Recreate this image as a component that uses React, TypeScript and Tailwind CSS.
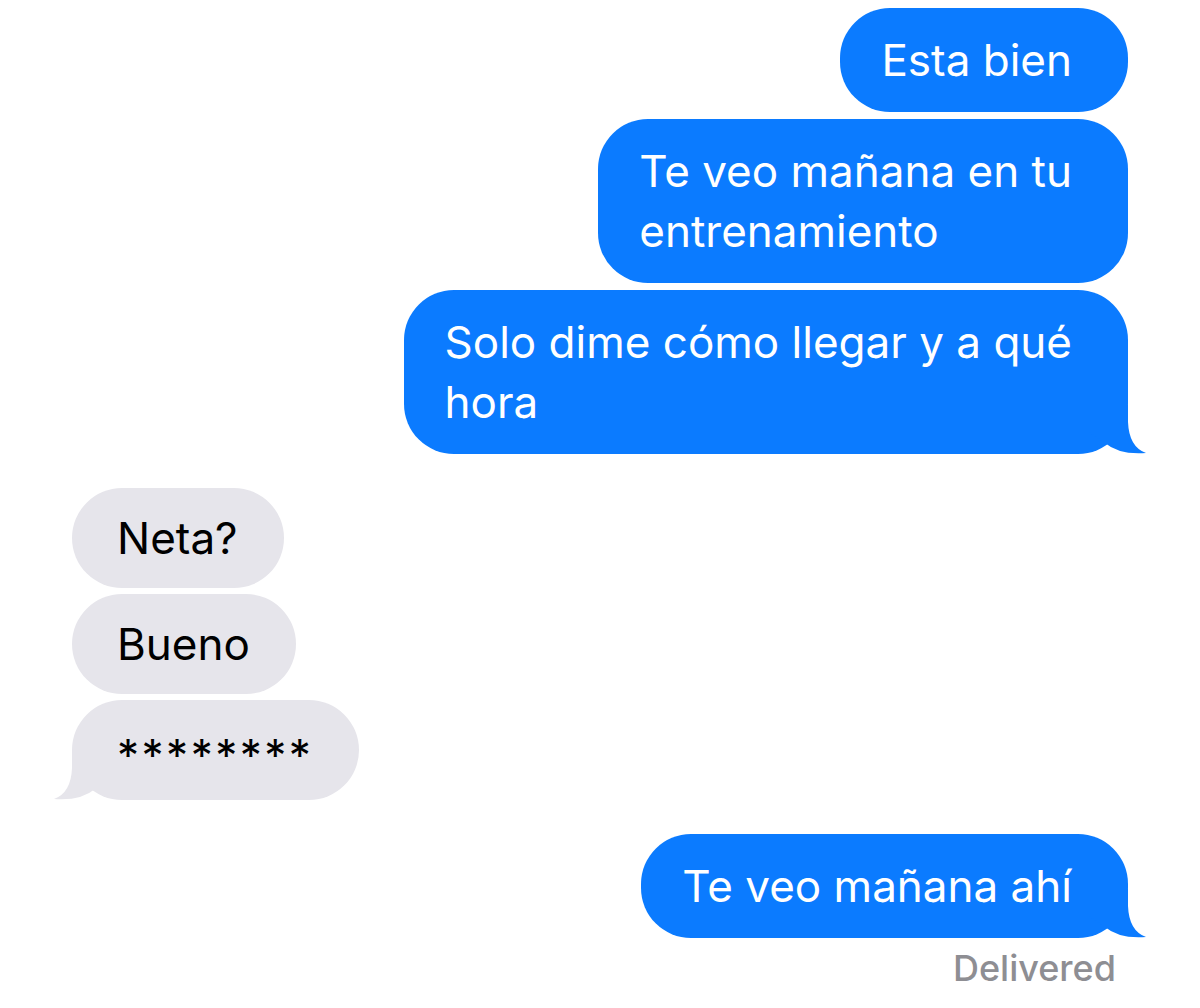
import React from "react";

type Side = "sent" | "received";

const FONT = { fontFamily: "Inter, 'Noto Sans', 'Liberation Sans', sans-serif" };

function Tail({ side }: { side: Side }) {
  const color = side === "sent" ? "#0b7bff" : "#e6e5eb";
  const pos =
    side === "sent"
      ? "absolute right-[-20px] bottom-[-1px]"
      : "absolute left-[-20px] bottom-[-1px] -scale-x-100";
  return (
    <svg className={pos} width="62" height="50" viewBox="0 0 62 50">
      <path
        d="M42 0 L42 17 Q43 42 60 48 Q33 50 19 38 L0 25 L0 0 Z"
        fill={color}
      />
    </svg>
  );
}

function Bubble({
  side,
  children,
  tail = false,
}: {
  side: Side;
  children: React.ReactNode;
  tail?: boolean;
}) {
  const sent = side === "sent";
  return (
    <div
      className={
        sent
          ? "relative w-fit rounded-[50px] bg-[#0b7bff] pl-[41px] pr-[56px] py-[22px] text-white"
          : "relative w-fit rounded-[50px] bg-[#e6e5eb] pl-[45px] pr-[46px] py-[21px] text-black"
      }
    >
      <p
        className={
          sent
            ? "whitespace-pre-line text-[44px] leading-[60px]"
            : "whitespace-pre-line text-[44px] leading-[58px]"
        }
      >
        {children}
      </p>
      {tail && <Tail side={side} />}
    </div>
  );
}

export default function App() {
  return (
    <div className="min-h-[1008px] w-[1200px] bg-white px-[72px] pt-2" style={FONT}>
      <div className="flex flex-col items-end gap-[7px]">
        <Bubble side="sent">Esta bien</Bubble>
        <Bubble side="sent">{"Te veo mañana en tu\nentrenamiento"}</Bubble>
        <Bubble side="sent" tail>
          {"Solo dime cómo llegar y a qué\nhora"}
        </Bubble>
      </div>

      <div className="mt-[34px] flex flex-col items-start gap-[6px]">
        <Bubble side="received">Neta?</Bubble>
        <Bubble side="received">Bueno</Bubble>
        <Bubble side="received" tail>
          <span className="relative top-[5px] tracking-[2.5px]">********</span>
        </Bubble>
      </div>

      <div className="mt-[34px] flex flex-col items-end">
        <Bubble side="sent" tail>
          Te veo mañana ahí
        </Bubble>
        <p className="mt-[8px] pr-[12px] text-[36px] font-medium leading-[44px] text-[#8e8e93]">
          Delivered
        </p>
      </div>
    </div>
  );
}
